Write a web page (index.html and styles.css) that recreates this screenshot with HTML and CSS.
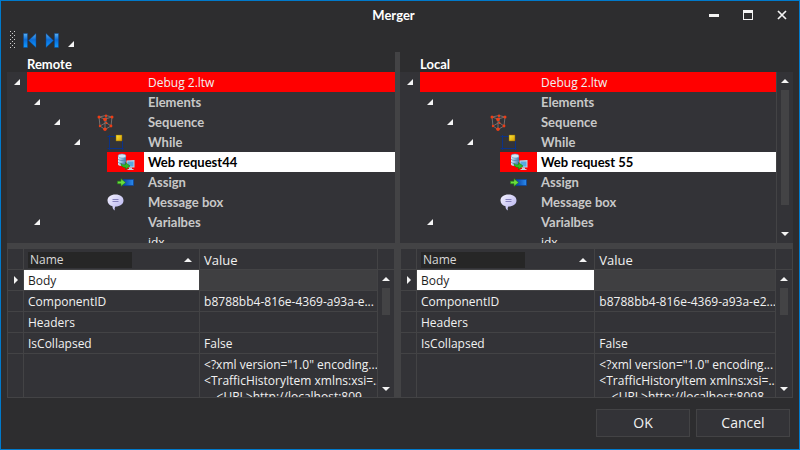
FILE: index.html
```
<!DOCTYPE html>
<html lang="en">
<head>
<meta charset="utf-8">
<title>Merger</title>
<link rel="stylesheet" href="styles.css">
</head>
<body>
<svg class="defs" aria-hidden="true">
  <defs>
    <linearGradient id="blue" x1="0" y1="0" x2="0" y2="1"><stop offset="0" stop-color="#5ab0f0"/><stop offset=".45" stop-color="#0a6cd8"/><stop offset="1" stop-color="#109cff"/></linearGradient>
    <linearGradient id="gold" x1="0" y1="0" x2="1" y2="1"><stop offset="0" stop-color="#ffe93a"/><stop offset="1" stop-color="#d49a00"/></linearGradient>
    <linearGradient id="bar" x1="0" y1="0" x2="1" y2="0"><stop offset="0" stop-color="#0a3f9c"/><stop offset="1" stop-color="#2a8cf0"/></linearGradient>
    <linearGradient id="steel" x1="0" y1="0" x2="1" y2="0"><stop offset="0" stop-color="#dcebf7"/><stop offset=".5" stop-color="#88b4d8"/><stop offset="1" stop-color="#4678a8"/></linearGradient>
    <linearGradient id="talk" x1="0" y1="0" x2="1" y2="1"><stop offset="0" stop-color="#f4f2ff"/><stop offset="1" stop-color="#b4b0ee"/></linearGradient>
    <symbol id="tri" viewBox="0 0 6 6"><path d="M6 0v6H0z" fill="#f4f4f4"/></symbol>
    <symbol id="up" viewBox="0 0 8 4"><path d="M0 4 4 0l4 4z" fill="#f4f4f4"/></symbol>
    <symbol id="down" viewBox="0 0 8 4"><path d="M0 0h8L4 4z" fill="#f4f4f4"/></symbol>
    <symbol id="cube" viewBox="0 0 17 17">
      <path d="M2 3 9 1.500 15 3 8 5zM2 3l1 9 5 3.500 6-3.500 1-9M8 5v10.500M9 1.500v7L3 12m6-3.500 5 3.500" fill="none" stroke="#857d7a" stroke-width=".8"/>
      <g fill="#f03c14"><circle cx="2" cy="3" r="1.500"/><circle cx="9" cy="1.700" r="1.200"/><circle cx="15" cy="3" r="1.500"/><circle cx="8" cy="5.500" r="1.800"/><circle cx="3" cy="12" r="1.200"/><circle cx="14" cy="12" r="1.400"/><circle cx="8" cy="15.300" r="1.700"/><circle cx="9.500" cy="9" r="1"/></g>
    </symbol>
    <symbol id="loop" viewBox="0 0 17 17"><path d="M2.500 1v15M.5 2.500h15M.5 14.500h16M15.500 7v9" fill="none" stroke="#0c3286"/><path d="M9 1h6v6H9z" fill="url(#gold)" stroke="#8a6400" stroke-width=".5"/></symbol>
    <symbol id="web" viewBox="0 0 18 18">
      <path d="M1 3v8.500c1 2 7 2 8 0V3z" fill="url(#steel)"/><ellipse cx="5" cy="3" rx="4" ry="2" fill="#d4e6f4" stroke="#6c9cc4" stroke-width=".6"/><path d="M1 6c1 2 7 2 8 0M1 9c1 2 7 2 8 0" fill="none" stroke="#4a7cab" stroke-width=".7"/>
      <path d="M9.500 7.500 17.500 7v7.500h-8z" fill="#b8d8ec"/><path d="M10.500 8.500h6v5h-6z" fill="#5aaade"/><path d="M12 14.500h3V16h1.500v1h-6v-1H12z" fill="#c6d0d8"/>
      <path d="M4 10.500c1 1.500 2.500 1.500 4.500 1V9.500l4.500 3.500-4.500 3.500v-2C6 14.500 4 13.500 4 10.500z" fill="#35ba20" stroke="#12700c" stroke-width=".5"/>
    </symbol>
    <symbol id="assign" viewBox="0 0 17 9"><path d="M6 1.500h10.500v6H6z" fill="url(#bar)" stroke="#08429c" stroke-width=".7"/><path d="M.5 3.200H4V.7l4.500 3.800L4 8.300V5.800H.5z" fill="#6add3c" stroke="#228a14" stroke-width=".6"/></symbol>
    <symbol id="message" viewBox="0 0 17 17"><path d="M8.500.5C3.700.5.5 3 .5 6.500c0 3 2.200 5 5 5.700 0 1.800.5 3.300 2.500 4.300-.6-1.500-.4-2.800.4-4 4.800 0 8.100-2.500 8.100-6S13.300.5 8.500.5z" fill="url(#talk)"/><path d="M5.500 5.500h6M5.500 7.500h6" stroke="#8580bc" stroke-width="1"/></symbol>
  </defs>
</svg>

<div class="window">
  <header class="titlebar">
    <h1>Merger</h1>
    <div class="controls">
      <button aria-label="Minimize"><svg width="10" height="10" viewBox="0 0 10 10"><path d="M0 4h10v3H0z" fill="#f4f4f4"/></svg></button>
      <button aria-label="Maximize"><svg width="10" height="10" viewBox="0 0 10 10"><path d="M0 0h10v10H0zM1 3v6h8V3z" fill="#f4f4f4" fill-rule="evenodd"/></svg></button>
      <button aria-label="Close"><svg width="10" height="10" viewBox="0 0 10 10"><path d="m1 1 8 8M9 1 1 9" stroke="#f4f4f4" stroke-width="1.700"/></svg></button>
    </div>
  </header>

  <div class="toolbar" role="toolbar" aria-label="Differences">
    <svg class="grip" width="5" height="18" viewBox="0 0 5 18"><path d="M.5 0v18M4.500 0v18M2.500 2v16" stroke="#d0d0d0" stroke-dasharray="1 3"/></svg>
    <button aria-label="Previous difference"><svg width="14" height="15" viewBox="0 0 14 15"><path d="M.5.500h4v14h-4zM13 .500v14L5.500 7.500z" fill="url(#blue)" stroke="#0a4694" stroke-width=".5"/></svg></button>
    <button aria-label="Next difference"><svg width="14" height="15" viewBox="0 0 14 15"><path d="M9.500.500h4v14h-4zM1 .500v14l7.500-7z" fill="url(#blue)" stroke="#0a4694" stroke-width=".5"/></svg></button>
    <button class="more" aria-label="Toolbar options"><svg width="6" height="6"><use href="#tri"/></svg></button>
  </div>

  <main class="panes">
    <section class="pane">
      <h2>Remote</h2>
      <div class="tree">
        <ul>
          <li class="changed"><span class="lead"><span class="gutter l1"><button aria-label="Collapse"><svg width="6" height="6"><use href="#tri"/></svg></button></span><span class="pic"></span></span><span class="label plain">Debug 2.ltw</span></li>
          <li><span class="lead"><span class="gutter l2"><button aria-label="Collapse"><svg width="6" height="6"><use href="#tri"/></svg></button></span></span><span class="label">Elements</span></li>
          <li><span class="lead"><span class="gutter l3"><button aria-label="Collapse"><svg width="6" height="6"><use href="#tri"/></svg></button></span><span class="pic p30"><svg width="17" height="17"><use href="#cube"/></svg></span></span><span class="label">Sequence</span></li>
          <li><span class="lead"><span class="gutter l4"><button aria-label="Collapse"><svg width="6" height="6"><use href="#tri"/></svg></button></span><span class="pic p20"><svg width="17" height="17"><use href="#loop"/></svg></span></span><span class="label">While</span></li>
          <li class="current"><span class="lead"><span class="gutter l5"></span><span class="pic p10"><svg width="18" height="18"><use href="#web"/></svg></span></span><span class="label">Web request44</span></li>
          <li><span class="lead"><span class="gutter l5"></span><span class="pic p10"><svg width="17" height="9"><use href="#assign"/></svg></span></span><span class="label">Assign</span></li>
          <li><span class="lead"><span class="gutter l5"></span><span class="pic"><svg width="17" height="17"><use href="#message"/></svg></span></span><span class="label">Message box</span></li>
          <li><span class="lead"><span class="gutter l2"><button aria-label="Collapse"><svg width="6" height="6"><use href="#tri"/></svg></button></span></span><span class="label">Varialbes</span></li>
          <li><span class="lead"></span><span class="label plain">idx</span></li>
        </ul>
      </div>
      <div class="props">
        <table>
          <colgroup><col class="c-mark"><col class="c-name"><col><col class="c-scroll"></colgroup>
          <thead><tr><th></th><th><div class="sort"><span class="name">Name</span><svg width="8" height="4"><use href="#up"/></svg></div></th><th class="value">Value</th><th></th></tr></thead>
          <tbody>
            <tr class="active"><td class="mark"><svg width="4" height="8" viewBox="0 0 4 8"><path d="m0 0 4 4-4 4z" fill="#f4f4f4"/></svg></td><td>Body</td><td></td>
              <td class="bar" rowspan="5"><div class="scroll"><button aria-label="Scroll up"><svg width="8" height="4"><use href="#up"/></svg></button><span class="thumb short"></span><button aria-label="Scroll down"><svg width="8" height="4"><use href="#down"/></svg></button></div></td></tr>
            <tr><td></td><td>ComponentID</td><td>b8788bb4-816e-4369-a93a-e...</td></tr>
            <tr><td></td><td>Headers</td><td></td></tr>
            <tr><td></td><td>IsCollapsed</td><td>False</td></tr>
            <tr><td></td><td></td><td><pre>&lt;?xml version="1.0" encoding...
&lt;TrafficHistoryItem xmlns:xsi=...
    &lt;URL&gt;http://localhost:809...</pre></td></tr>
          </tbody>
        </table>
      </div>
    </section>

    <div class="splitter"></div>

    <section class="pane">
      <h2>Local</h2>
      <div class="tree">
        <ul>
          <li class="changed"><span class="lead"><span class="gutter l1"><button aria-label="Collapse"><svg width="6" height="6"><use href="#tri"/></svg></button></span><span class="pic"></span></span><span class="label plain">Debug 2.ltw</span></li>
          <li><span class="lead"><span class="gutter l2"><button aria-label="Collapse"><svg width="6" height="6"><use href="#tri"/></svg></button></span></span><span class="label">Elements</span></li>
          <li><span class="lead"><span class="gutter l3"><button aria-label="Collapse"><svg width="6" height="6"><use href="#tri"/></svg></button></span><span class="pic p30"><svg width="17" height="17"><use href="#cube"/></svg></span></span><span class="label">Sequence</span></li>
          <li><span class="lead"><span class="gutter l4"><button aria-label="Collapse"><svg width="6" height="6"><use href="#tri"/></svg></button></span><span class="pic p20"><svg width="17" height="17"><use href="#loop"/></svg></span></span><span class="label">While</span></li>
          <li class="current"><span class="lead"><span class="gutter l5"></span><span class="pic p10"><svg width="18" height="18"><use href="#web"/></svg></span></span><span class="label">Web request 55</span></li>
          <li><span class="lead"><span class="gutter l5"></span><span class="pic p10"><svg width="17" height="9"><use href="#assign"/></svg></span></span><span class="label">Assign</span></li>
          <li><span class="lead"><span class="gutter l5"></span><span class="pic"><svg width="17" height="17"><use href="#message"/></svg></span></span><span class="label">Message box</span></li>
          <li><span class="lead"><span class="gutter l2"><button aria-label="Collapse"><svg width="6" height="6"><use href="#tri"/></svg></button></span></span><span class="label">Varialbes</span></li>
          <li><span class="lead"></span><span class="label plain">idx</span></li>
        </ul>
        <div class="scroll edge"><button aria-label="Scroll up"><svg width="8" height="4"><use href="#up"/></svg></button><span class="thumb long"></span><button aria-label="Scroll down"><svg width="8" height="4"><use href="#down"/></svg></button></div>
      </div>
      <div class="props">
        <table>
          <colgroup><col class="c-mark"><col class="c-name"><col><col class="c-scroll"></colgroup>
          <thead><tr><th></th><th><div class="sort"><span class="name">Name</span><svg width="8" height="4"><use href="#up"/></svg></div></th><th class="value">Value</th><th></th></tr></thead>
          <tbody>
            <tr class="active"><td class="mark"><svg width="4" height="8" viewBox="0 0 4 8"><path d="m0 0 4 4-4 4z" fill="#f4f4f4"/></svg></td><td>Body</td><td></td>
              <td class="bar" rowspan="5"><div class="scroll"><button aria-label="Scroll up"><svg width="8" height="4"><use href="#up"/></svg></button><span class="thumb short"></span><button aria-label="Scroll down"><svg width="8" height="4"><use href="#down"/></svg></button></div></td></tr>
            <tr><td></td><td>ComponentID</td><td>b8788bb4-816e-4369-a93a-e2...</td></tr>
            <tr><td></td><td>Headers</td><td></td></tr>
            <tr><td></td><td>IsCollapsed</td><td>False</td></tr>
            <tr><td></td><td></td><td><pre>&lt;?xml version="1.0" encoding...
&lt;TrafficHistoryItem xmlns:xsi=...
    &lt;URL&gt;http://localhost:8098...</pre></td></tr>
          </tbody>
        </table>
      </div>
    </section>
  </main>

  <footer class="actions">
    <button>OK</button>
    <button>Cancel</button>
  </footer>
</div>
</body>
</html>
```
FILE: styles.css
```
* { box-sizing: border-box; }

body {
  margin: 0;
  background: #2d2d2f;
  color: #f1f1f1;
  font: 12px/16px "Open Sans", "Noto Sans", sans-serif;
}

svg { display: block; flex: none; }
.defs { position: absolute; width: 0; height: 0; }

button {
  display: flex;
  align-items: center;
  justify-content: center;
  padding: 0;
  border: 0;
  background: none;
  color: inherit;
  font: inherit;
}

h1, h2 {
  margin: 0;
  color: #fff;
  font: 700 13px/20px Lato, sans-serif;
}

.window {
  display: flex;
  flex-direction: column;
  height: 100vh;
  min-height: 400px;
  border: 1px solid #007acc;
}

/* Title bar and toolbar */
.titlebar {
  display: grid;
  grid-template-columns: 100px 1fr 106px;
  align-items: center;
  height: 27px;
  padding-right: 7px;
}
.titlebar h1 { grid-column: 2; line-height: 16px; text-align: center; }
.controls { display: flex; justify-content: flex-end; gap: 14px; }
.controls button { width: 20px; height: 22px; }

.toolbar {
  display: flex;
  align-items: center;
  gap: 8px;
  height: 24px;
  padding-left: 9px;
}
.more { padding: 8px 0 0 1px; }

/* Two compared files */
.panes {
  display: grid;
  grid-template-columns: 388fr 5px 393fr;
  flex: 1;
  min-height: 0;
  padding: 0 6px;
}
.splitter { background: #434345; }
.pane {
  display: flex;
  flex-direction: column;
  min-width: 0;
  min-height: 0;
}
.pane h2 { height: 20px; padding-left: 20px; line-height: 24px; }

.tree {
  display: flex;
  flex: 1;
  min-height: 0;
  overflow: hidden;
  background: #333337;
}
.tree ul {
  flex: 1;
  margin: 0;
  padding: 0;
  list-style: none;
}
.tree li { display: flex; height: 20px; }
.lead { display: flex; flex: none; width: 137px; }
.gutter {
  display: flex;
  flex: none;
  justify-content: flex-end;
  padding-right: 7px;
}
.l1 { width: 20px; }
.l2 { width: 40px; }
.l3 { width: 60px; }
.l4 { width: 80px; }
.l5 { width: 100px; }
.pic { display: flex; flex: 1; align-items: center; }
.p10 { padding-left: 10px; }
.p20 { padding-left: 20px; }
.p30 { padding-left: 30px; }
.label {
  flex: 1;
  padding-left: 4px;
  color: #c8c8c8;
  font: 700 13px/21px Lato, sans-serif;
  white-space: nowrap;
}
.label.plain { color: #f1f1f1; font: 12px/22px "Open Sans", sans-serif; }
.changed .pic, .changed .label, .current .pic { background: #f00; }
.current .label { background: #fff; color: #000; line-height: 20px; }

.scroll {
  display: flex;
  flex-direction: column;
  align-items: center;
  width: 16px;
  height: 100%;
}
.scroll.edge { width: 17px; border-left: 1px solid #434345; }
.scroll button { width: 16px; height: 18px; }
.scroll button:last-child { height: 17px; margin-top: auto; }
.thumb { width: 8px; background: #434345; }
.thumb.short { height: 27px; }
.thumb.long { height: 115px; }

/* Property grid */
.props { border-top: 6px solid #434345; }
.props table {
  width: 100%;
  border-collapse: collapse;
  table-layout: fixed;
  background: #333337;
}
.c-mark { width: 16px; }
.c-name { width: 45.5%; }
.c-scroll { width: 17px; }
.props th, .props td {
  height: 21px;
  padding: 0 0 0 4px;
  border: 1px solid #434345;
  font-weight: 400;
  text-align: left;
  vertical-align: middle;
  white-space: nowrap;
  overflow: hidden;
}
.props th { padding-top: 2px; border-top: 0; }
.props td { padding-top: 2px; }
.props th.value { font-size: 13px; }
.props td.mark { padding: 0 0 0 6px; }
.props td.bar { padding: 0; }
.props .bar .scroll { height: 127px; }
.active td:nth-child(2) { background: #fff; color: #1e1e1e; }
.active td:nth-child(3) { background: #3f3f41; }
.sort {
  display: flex;
  align-items: center;
  justify-content: space-between;
  padding-right: 7px;
}
.name { width: 104px; padding-left: 2px; background: #262626; color: #d8d8d8; }
.props pre {
  height: 41px;
  margin: 0;
  padding-top: 1px;
  overflow: hidden;
  font: inherit;
}

.actions {
  display: flex;
  justify-content: flex-end;
  gap: 6px;
  padding: 11px 9px 12px;
}
.actions button {
  width: 94px;
  height: 28px;
  border: 1px solid #434345;
  background: #333337;
  font-size: 14px;
}
```
